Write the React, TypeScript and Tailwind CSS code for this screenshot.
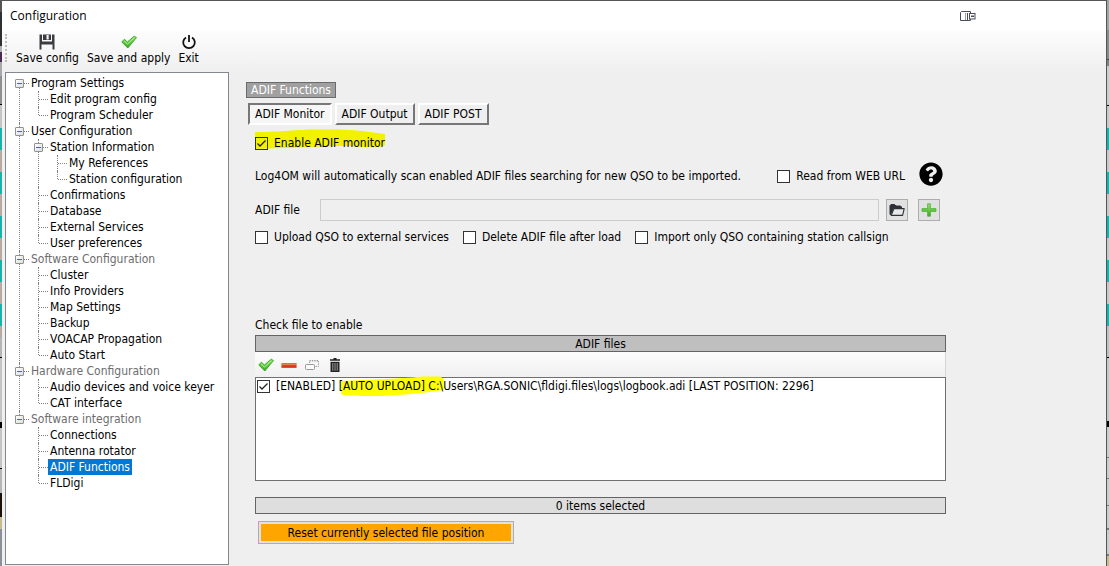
import { useState } from 'react';
import type { ReactNode } from 'react';
import { FaQuestionCircle } from 'react-icons/fa';

type TreeNode = {
    label: string;
    muted?: boolean;
    children?: TreeNode[];
};

const TREE: TreeNode[] = [
    {
        label: 'Program Settings',
        children: [{ label: 'Edit program config' }, { label: 'Program Scheduler' }],
    },
    {
        label: 'User Configuration',
        children: [
            {
                label: 'Station Information',
                children: [{ label: 'My References' }, { label: 'Station configuration' }],
            },
            { label: 'Confirmations' },
            { label: 'Database' },
            { label: 'External Services' },
            { label: 'User preferences' },
        ],
    },
    {
        label: 'Software Configuration',
        muted: true,
        children: [
            { label: 'Cluster' },
            { label: 'Info Providers' },
            { label: 'Map Settings' },
            { label: 'Backup' },
            { label: 'VOACAP Propagation' },
            { label: 'Auto Start' },
        ],
    },
    {
        label: 'Hardware Configuration',
        muted: true,
        children: [{ label: 'Audio devices and voice keyer' }, { label: 'CAT interface' }],
    },
    {
        label: 'Software integration',
        muted: true,
        children: [
            { label: 'Connections' },
            { label: 'Antenna rotator' },
            { label: 'ADIF Functions' },
            { label: 'FLDigi' },
        ],
    },
];

const TABS = ['ADIF Monitor', 'ADIF Output', 'ADIF POST'];

// Slivers of the application behind the dialog
const LEFT_STRIP = [
    'h-[12px] bg-[#555555]',
    'h-[34px] bg-[#2f3033]',
    'h-[6px] bg-[#b0b0b0]',
    'h-[10px] bg-[#4a2a55]',
    'h-[14px] bg-[#a8a8a8]',
    'h-[28px] bg-[#8f8f8f]',
    'h-[1px] bg-black',
    'h-[23px] bg-[#c4c4c4]',
    'h-[22px] bg-[#16b3ad]',
    'h-[22px] bg-[#b9aaa5]',
    'h-[22px] bg-[#16b3ad]',
    'h-[22px] bg-[#b9aaa5]',
    'h-[22px] bg-[#16b3ad]',
    'h-[22px] bg-[#b9aaa5]',
    'h-[22px] bg-[#16b3ad]',
    'h-[22px] bg-[#b9aaa5]',
    'h-[22px] bg-[#16b3ad]',
    'h-[12px] bg-[#b9aaa5]',
    'h-[19px] bg-[#b5b5b5]',
    'h-[1px] bg-black',
    'h-[64px] bg-[#c4c4c4]',
    'h-[6px] bg-black',
    'h-[40px] bg-[#c4c4c4]',
    'h-[1px] bg-black',
    'h-[24px] bg-[#b5b5b5]',
    'h-[24px] bg-[#1a1208]',
    'h-[12px] bg-[#c8bb90]',
    'grow bg-[#8d9099]',
];

const RIGHT_STRIP = [
    'h-[30px] bg-[#a3a3a3]',
    'h-[29px] bg-[#8a8a8a]',
    'h-[1px] bg-[#444444]',
    'h-[6px] bg-[#808080]',
    'h-[39px] bg-[#cccccc]',
    'h-[1px] bg-black',
    'h-[22px] bg-[#c8c8c8]',
    'h-[22px] bg-[#16b3ad]',
    'h-[22px] bg-[#c8c8c8]',
    'h-[22px] bg-[#16b3ad]',
    'h-[22px] bg-[#c8c8c8]',
    'h-[22px] bg-[#16b3ad]',
    'h-[22px] bg-[#c8c8c8]',
    'h-[22px] bg-[#16b3ad]',
    'h-[22px] bg-[#c8c8c8]',
    'h-[22px] bg-[#16b3ad]',
    'h-[31px] bg-[#c0c0c0]',
    'h-[1px] bg-black',
    'h-[63px] bg-[#c6c6c6]',
    'h-[6px] bg-black',
    'h-[30px] bg-[#cccccc]',
    'h-[1px] bg-[#777777]',
    'h-[20px] bg-[#cccccc]',
    'h-[1px] bg-[#777777]',
    'h-[26px] bg-[#cccccc]',
    'h-[1px] bg-[#777777]',
    'h-[22px] bg-[#cccccc]',
    'h-[2px] bg-[#777777]',
    'h-[24px] bg-[#cccccc]',
    'h-[2px] bg-[#777777]',
    'grow bg-[#c8bb90]',
];

const Strip = ({ parts }: { parts: string[] }) => (
    <div className="flex w-[2px] shrink-0 flex-col" aria-hidden="true">
        {parts.map((part, i) => (
            <span key={i} className={`shrink-0 ${part}`} />
        ))}
    </div>
);

/* Icons */

const SaveIcon = () => (
    <svg viewBox="0 0 16 16" className="h-4 w-4">
        <path d="M0.5 0.5h2.5v7h10v-7h2.5v15h-2v-5h-11v5h-2z" fill="#3c3c40" />
        <path d="M4 0.5h6v5.5h-6z" fill="#3c3c40" />
        <path d="M7.5 1h2.2v4.5h-2.2z" fill="#f4f4f4" />
        <path d="M10 0.5h2v5.5h-2z" fill="#3c3c40" />
    </svg>
);

const GreenCheckIcon = () => (
    <svg viewBox="0 0 16 16" className="h-4 w-4">
        <defs>
            <linearGradient id="checkFill" x1="0" y1="0" x2="0" y2="1">
                <stop offset="0" stopColor="#8fe36a" />
                <stop offset="1" stopColor="#2fae1c" />
            </linearGradient>
        </defs>
        <path d="M0.8 8L3.4 5.2L6.4 8L13.2 2.2L15.5 3.6L6.8 14Z" fill="url(#checkFill)" stroke="#2c9a1c" strokeWidth="0.8" strokeLinejoin="round" />
        <path d="M3.2 7L6.5 10L13 4" fill="none" stroke="#b9f29c" strokeWidth="1" />
    </svg>
);

const PowerIcon = () => (
    <svg viewBox="0 0 16 16" className="h-4 w-4" fill="none" stroke="#111111" strokeWidth="1.8">
        <path d="M5 3.4A5.8 5.8 0 1 0 11 3.4" />
        <path d="M8 1v7" />
    </svg>
);

const MinusIcon = () => (
    <svg viewBox="0 0 16 16" className="h-4 w-4">
        <rect x="0.5" y="6" width="15" height="4.5" rx="0.5" fill="#e2441f" />
        <rect x="1" y="6.4" width="14" height="1.4" fill="#f08360" />
        <rect x="0.5" y="9.6" width="15" height="1" fill="#b22e14" />
    </svg>
);

const WindowsIcon = () => (
    <svg viewBox="0 0 16 16" className="h-4 w-4" fill="none" stroke="#999999">
        <path d="M5.5 6V3.5H14.5V9.5H11.5" strokeDasharray="1.4 1" />
        <path d="M5.5 4.5H14.5" stroke="#cccccc" strokeDasharray="1.4 1" />
        <rect x="1.5" y="7.5" width="9" height="5" rx="1" fill="#fafafa" />
    </svg>
);

const TrashIcon = () => (
    <svg viewBox="0 0 16 16" className="h-4 w-4">
        <path d="M6.5 1h3v1.2h3.500v1.500h-10v-1.500h3.500z" fill="#222222" />
        <path d="M3.500 4.800h9v10.200h-9z" fill="#222222" />
        <path d="M5.8 6v7.8M8 6v7.8M10.2 6v7.8" stroke="#bbbbbb" strokeWidth="0.8" />
    </svg>
);

const FolderIcon = () => (
    <svg viewBox="0 0 16 14" className="h-[14px] w-4">
        <path d="M1 11.5V2.5L2 1.5H5.5L7 3H11.5L12.5 4V5.5H4.5L1.5 11.5Z" fill="#2e3136" stroke="#2e3136" strokeLinejoin="round" />
        <path d="M5 5.6H15.2L13.6 12.4H2.2Z" fill="#e8e8e8" stroke="#2e3136" strokeWidth="1.1" strokeLinejoin="round" />
    </svg>
);

const PlusIcon = () => (
    <svg viewBox="0 0 16 16" className="h-4 w-4">
        <defs>
            <linearGradient id="plusFill" x1="0" y1="0" x2="0" y2="1">
                <stop offset="0" stopColor="#9be36f" />
                <stop offset="1" stopColor="#35ad20" />
            </linearGradient>
        </defs>
        <path d="M6.6 1.8h2.8v4.8h5.6v2.8h-5.6v4.8h-2.8v-4.8h-5.6v-2.8h5.6z" fill="url(#plusFill)" stroke="#4fae35" strokeWidth="0.8" />
    </svg>
);

const DockIcon = () => (
    <svg viewBox="0 0 16 11" className="h-[11px] w-4" fill="none" stroke="#4c4c5c">
        <path d="M0.5 1.5V9.5H10.500V0.500H1.500Z" />
        <path d="M5.5 2v7" stroke="#a0a0a8" />
        <path d="M7.5 2v7" />
        <rect x="9.5" y="2.5" width="5.5" height="5.5" fill="#ffffff" />
        <path d="M11 4.5h3v1.5h-3z" fill="#4c4c5c" stroke="none" />
    </svg>
);

/* Form pieces */

type CheckFieldProps = {
    label: ReactNode;
    defaultChecked?: boolean;
    className?: string;
    boxClassName?: string;
};

const CheckField = ({ label, defaultChecked = false, className = '', boxClassName = 'bg-white' }: CheckFieldProps) => (
    <label className={`relative flex items-center whitespace-nowrap ${className}`}>
        <span className="relative mr-[6px] flex">
            <input
                type="checkbox"
                defaultChecked={defaultChecked}
                className={`peer h-[13px] w-[13px] appearance-none border border-[#333333] ${boxClassName}`}
            />
            <svg
                viewBox="0 0 13 13"
                className="pointer-events-none absolute inset-0 hidden h-[13px] w-[13px] peer-checked:block"
                fill="none"
                stroke="#222222"
                strokeWidth="1.3"
            >
                <path d="M2.5 6.5L5 9L10.5 3.5" />
            </svg>
        </span>
        {label}
    </label>
);

const ToolButton = ({ icon, label }: { icon: ReactNode; label: string }) => (
    <button className="flex flex-col items-center whitespace-nowrap">
        {icon}
        <span className="leading-4">{label}</span>
    </button>
);

type BranchProps = {
    nodes: TreeNode[];
    selected: string;
    onSelect: (label: string) => void;
    root?: boolean;
};

const Branch = ({ nodes, selected, onSelect, root = false }: BranchProps) => {
    const [closed, setClosed] = useState<string[]>([]);

    const toggle = (label: string) => {
        setClosed(closed.includes(label) ? closed.filter((l) => l !== label) : [...closed, label]);
    };

    return (
        <ul className={root ? '' : 'ml-[19px]'}>
            {nodes.map((node, i) => {
                const isLast = i === nodes.length - 1;
                const isOpen = !closed.includes(node.label);
                return (
                    <li key={node.label} className="relative">
                        {/* guide line */}
                        <span
                            className={`absolute left-[4px] border-l border-dotted border-[#808080] ${root && i === 0 ? 'top-2' : 'top-0'} ${isLast ? 'h-2' : 'bottom-0'}`}
                        />
                        <div className="relative flex h-4 items-center">
                            <span className="relative flex w-[14px] items-center">
                                <span className="absolute right-0 left-[5px] border-t border-dotted border-[#808080]" />
                                {node.children && (
                                    <button
                                        onClick={() => toggle(node.label)}
                                        aria-label={`Toggle ${node.label}`}
                                        className="relative flex h-[9px] w-[9px] items-center justify-center rounded-[1px] border border-[#919191] bg-gradient-to-br from-white to-[#dcdcdc]"
                                    >
                                        <span className="h-px w-[5px] bg-[#4b63a7]" />
                                    </button>
                                )}
                            </span>
                            <button
                                onClick={() => onSelect(node.label)}
                                className={`h-4 px-[2px] leading-4 whitespace-nowrap ${selected === node.label ? 'bg-[#0078d7] text-white' : node.muted ? 'text-[#6d6d6d]' : 'text-black'}`}
                            >
                                {node.label}
                            </button>
                        </div>
                        {node.children && isOpen && <Branch nodes={node.children} selected={selected} onSelect={onSelect} />}
                    </li>
                );
            })}
        </ul>
    );
};

const App = () => {
    const [selected, setSelected] = useState('ADIF Functions');
    const [tab, setTab] = useState('ADIF Monitor');

    return (
        <div className="flex h-screen overflow-hidden bg-[#efefef] font-['DejaVu_Sans_Condensed','DejaVu_Sans',sans-serif] text-[12px] leading-4 text-black">
            <Strip parts={LEFT_STRIP} />

            <div className="flex min-w-0 flex-1 flex-col border-t border-r border-[#555555]">
                {/* Title bar */}
                <header className="flex h-[30px] shrink-0 items-center justify-between bg-white pr-[130px] pl-2">
                    <h1 className="font-['Open_Sans','Noto_Sans',sans-serif] text-[12px]">Configuration</h1>
                    <button aria-label="Dock window">
                        <DockIcon />
                    </button>
                </header>

                {/* Toolbar */}
                <div className="flex h-[41px] shrink-0 items-start bg-gradient-to-b from-[#fdfdfd] to-[#efefef] pt-[3px] pl-[3px]">
                    <span className="mr-[9px] h-7 border-l-2 border-dotted border-[#bdbdbd]" />
                    <div className="flex gap-2">
                        <ToolButton icon={<SaveIcon />} label="Save config" />
                        <ToolButton icon={<GreenCheckIcon />} label="Save and apply" />
                        <ToolButton icon={<PowerIcon />} label="Exit" />
                    </div>
                </div>

                <div className="flex min-h-0 flex-1">
                    {/* Settings tree */}
                    <nav className="mb-px ml-[3px] w-[224px] shrink-0 border border-[#828790] bg-white pt-[2px] pl-[9px]">
                        <Branch nodes={TREE} selected={selected} onSelect={setSelected} root />
                    </nav>

                    <main className="min-w-0 flex-1 pt-[10px] pr-[160px] pl-[17px]">
                        <h2 className="flex h-4 w-fit items-center border border-[#6b6b6b] bg-[#a0a0a0] px-1 text-white">ADIF Functions</h2>

                        <div className="mt-[5px] ml-[2px] flex gap-[3px]" role="tablist">
                            {TABS.map((name) => (
                                <button
                                    key={name}
                                    role="tab"
                                    aria-selected={tab === name}
                                    onClick={() => setTab(name)}
                                    className={`h-[22px] border-2 px-[5px] whitespace-nowrap ${tab === name ? 'border-t-[#777777] border-r-white border-b-white border-l-[#777777] bg-[#f6f6f6]' : 'border-t-white border-r-[#777777] border-b-[#777777] border-l-white bg-[#efefef]'}`}
                                >
                                    {name}
                                </button>
                            ))}
                        </div>

                        <div className="ml-[9px]">
                            <div className="relative mt-[10px] flex">
                                <svg viewBox="0 0 130 21" className="absolute -top-[6px] left-0 h-[21px] w-[130px]" aria-hidden="true">
                                    <path d="M0 3C30 3 40 0.5 62 0.5C90 0 105 1 130 5V16C128 18 120 19 100 17.500C80 16 50 19 0 20Z" fill="#f2f200" />
                                </svg>
                                <CheckField label="Enable ADIF monitor" defaultChecked boxClassName="bg-transparent" />
                            </div>

                            <div className="mt-[11px] flex h-6 items-center pr-[3px]">
                                <p className="pt-1 whitespace-nowrap">
                                    Log4OM will automatically scan enabled ADIF files searching for new QSO to be imported.
                                </p>
                                <CheckField label="Read from WEB URL" className="ml-auto pt-1" />
                                <button aria-label="Help" className="ml-[14px]">
                                    <FaQuestionCircle className="h-6 w-6 text-black" />
                                </button>
                            </div>

                            <div className="mt-[13px] flex items-center pr-[6px]">
                                <label htmlFor="adif-file" className="w-[65px]">
                                    ADIF file
                                </label>
                                <input id="adif-file" type="text" readOnly className="h-[22px] min-w-0 flex-1 border border-[#cccccc] bg-[#efefef] px-1 outline-none" />
                                <button aria-label="Browse" className="ml-[7px] flex h-[22px] w-[22px] items-center justify-center border border-[#adadad] bg-[#e1e1e1]">
                                    <FolderIcon />
                                </button>
                                <button aria-label="Add file" className="ml-[10px] flex h-[22px] w-[22px] items-center justify-center border border-[#adadad] bg-[#e1e1e1]">
                                    <PlusIcon />
                                </button>
                            </div>

                            <div className="mt-2 flex gap-[14px]">
                                <CheckField label="Upload QSO to external services" />
                                <CheckField label="Delete ADIF file after load" />
                                <CheckField label="Import only QSO containing station callsign" />
                            </div>

                            {/* File list */}
                            <p className="mt-[72px]">Check file to enable</p>
                            <div className="mt-[2px] flex h-[17px] items-center justify-center border border-[#646464] bg-[#bfbfbf]">ADIF files</div>
                            <div className="flex h-[25px] items-center gap-[7px] border-r border-[#d5d5d5] bg-gradient-to-b from-[#fdfdfd] to-[#f0f0f0] pl-[3px]">
                                <button aria-label="Enable">
                                    <GreenCheckIcon />
                                </button>
                                <button aria-label="Disable">
                                    <MinusIcon />
                                </button>
                                <button aria-label="Duplicate">
                                    <WindowsIcon />
                                </button>
                                <button aria-label="Delete">
                                    <TrashIcon />
                                </button>
                            </div>
                            <div className="h-[104px] border border-[#707070] bg-white pl-px">
                                <CheckField
                                    defaultChecked
                                    label={
                                        <span>
                                            [ENABLED]{' '}
                                            <span className="relative isolate inline-block">
                                                <svg viewBox="0 0 118 22" preserveAspectRatio="none" className="absolute top-[-2px] left-[2px] -z-10 h-[22px] w-full" aria-hidden="true">
                                                    <path d="M0 5C30 4 80 2 92 0.500H112L116 3V14C95 17 70 19 45 20C25 20 5 20 0 18Z" fill="#ffff00" />
                                                </svg>
                                                [AUTO UPLOAD] C:\
                                            </span>
                                            Users\RGA.SONIC\fldigi.files\logs\logbook.adi [LAST POSITION: 2296]
                                        </span>
                                    }
                                />
                            </div>

                            <div className="mt-4 flex h-[17px] items-center justify-center border border-[#646464] bg-[#dedede]">0 items selected</div>
                            <button className="mt-[7px] ml-[3px] block h-[23px] w-64 border border-[#adadad] bg-[#e1e1e1] p-[2px]">
                                <span className="flex h-full items-center justify-center bg-[#ffa500]">Reset currently selected file position</span>
                            </button>
                        </div>
                    </main>
                </div>
            </div>

            <Strip parts={RIGHT_STRIP} />
        </div>
    );
};

export default App;
